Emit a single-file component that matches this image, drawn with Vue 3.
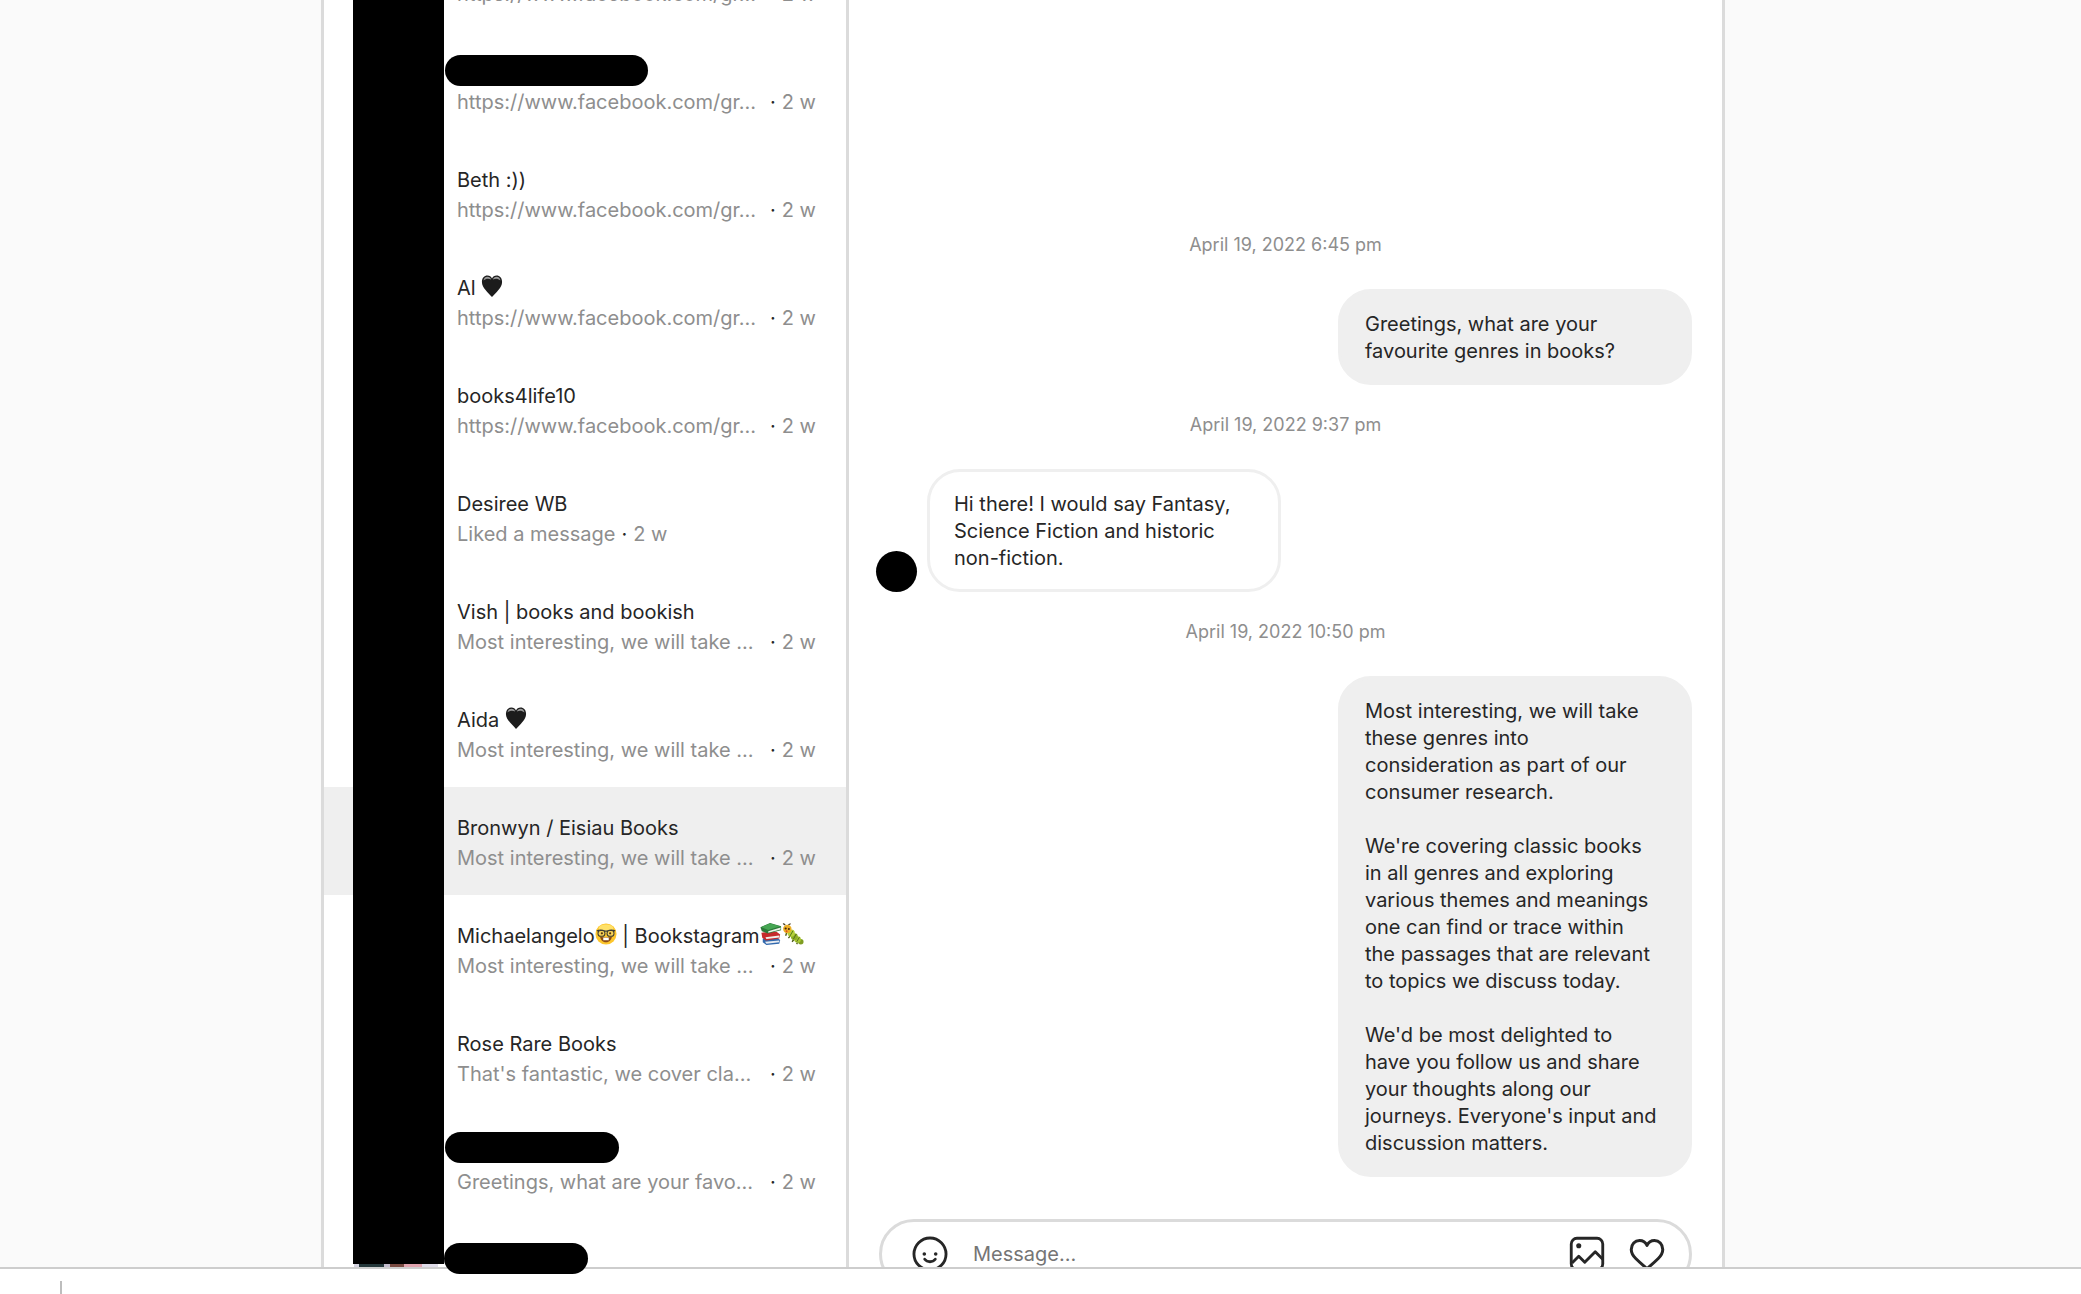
<!--
  Direct messages inbox
  Conversation list on the left, open thread on the right
-->
<template>
  <div class="page">
    <div class="viewport">
      <main class="inbox">
        <nav class="sidebar" aria-label="Conversations">
          <ul class="conversation-list">
            <li v-for="item in conversations" :key="item.id">
              <a href="#" class="conversation" :class="{ selected: item.selected }">
                <span class="avatar" :class="{ photo: item.photo }"></span>
                <span class="conversation-text">
                  <span class="conversation-name">
                    <template v-for="(part, i) in item.name" :key="i">
                      <span v-if="part.text" class="name-text">{{ part.text }}</span>
                      <svg v-else class="emoji" viewBox="0 0 24 24" aria-hidden="true">
                        <template v-if="part.emoji === 'heart'">
                          <path d="M12 24C8 19 1 14 1 7.500 1 3 3.700.5 7 .5c2.300 0 4.200 1.300 5 3.200C12.800 1.800 14.700.5 17 .5c3.300 0 6 2.500 6 7C23 14 16 19 12 24z" fill="#1c1c1c" />
                          <path d="M2.800 6C3 3.500 4.700 2 7 2c2 0 3.500 1.200 4 2.800C8 3.600 5.300 3.800 2.800 6z" fill="#9a9a9a" />
                          <path d="M13 4.800C13.700 3.200 15 2 17 2c2.300 0 4 1.500 4.200 4C18.700 3.800 16 3.600 13 4.800z" fill="#9a9a9a" />
                        </template>
                        <template v-else-if="part.emoji === 'nerd'">
                          <circle cx="12" cy="12" r="11.500" fill="#fdc62d" />
                          <ellipse cx="12" cy="6" rx="8" ry="4.500" fill="#ffe169" />
                          <path d="M5.500 15c1 4.500 3.500 6 6.500 6s5.500-1.500 6.500-6c-4 1.200-9 1.200-13 0z" fill="#8a4b14" />
                          <path d="M9 16h6v2.800H9z" fill="#fff" />
                          <path d="M2 8.500c3-1 6-1 8.500.3h3c2.500-1.300 5.500-1.300 8.500-.3" fill="none" stroke="#3b3b34" stroke-width="1.400" />
                          <rect x="3.300" y="8.300" width="7.500" height="6.200" rx="2.800" fill="#f6d257" stroke="#3b3b34" stroke-width="1.100" />
                          <rect x="13.200" y="8.300" width="7.500" height="6.200" rx="2.800" fill="#f6d257" stroke="#3b3b34" stroke-width="1.100" />
                          <circle cx="7.500" cy="11.300" r="1.200" fill="#553410" />
                          <circle cx="16.500" cy="11.300" r="1.200" fill="#553410" />
                        </template>
                        <template v-else-if="part.emoji === 'books'">
                          <path d="M3 17l15-1.500 4 3-1 4L7 24l-4-3z" fill="#3269ae" />
                          <path d="M5.500 20.500L21 19v2L7 22.500z" fill="#e9edf2" />
                          <path d="M1.500 10.500L18 9.500l4 3-1 4.500-14.500 2-4-3z" fill="#c52a2a" />
                          <path d="M6 15.500L21 13.500v2.300L7 17.500z" fill="#f2eee9" />
                          <path d="M.5 4.500L11 0l12 3.500v4.500L8.500 11.500 2 9z" fill="#2c7a39" />
                          <path d="M1.500 4.500L11 .5l11 3L9 7.500z" fill="#46a653" />
                          <path d="M9 9l13.500-4v2L9 10.500z" fill="#eef2e8" />
                        </template>
                        <template v-else>
                          <path d="M3.500 2.500C3 1.200 2 .8 1 1M7 3c.3-1.500 1.500-2.200 2.500-1.800" fill="none" stroke="#3c3316" stroke-width="1.200" />
                          <path d="M5 11l-1 3M9 14l-2 2.500M13 18l-2 2.500M17 21l-1 2" stroke="#4b5a14" stroke-width="1.500" />
                          <circle cx="20.500" cy="20.500" r="3" fill="#7f9d22" />
                          <circle cx="17" cy="18" r="3.600" fill="#a8c832" />
                          <circle cx="13.500" cy="15" r="3.800" fill="#8dae27" />
                          <circle cx="10" cy="11" r="4" fill="#b3d13a" />
                          <path d="M12 8.500l-3.500 6M15.500 12l-3 5.500M19 15.500l-3 5" stroke="#52691a" stroke-width="1" />
                          <circle cx="5.800" cy="6.500" r="4.600" fill="#ecae25" />
                          <circle cx="4" cy="6" r="1.200" fill="#44240c" />
                          <circle cx="7.500" cy="6.500" r="1.100" fill="#44240c" />
                          <circle cx="5" cy="9" r="1" fill="#dd4b22" />
                        </template>
                      </svg>
                    </template>
                  </span>
                  <span v-if="item.preview" class="conversation-preview">
                    <span class="preview-text" :class="{ fill: item.preview.endsWith('…') }">{{ item.preview }}</span>
                    <span class="dot">·</span>
                    <span class="age">2 w</span>
                  </span>
                </span>
                <span
                  v-if="item.cover"
                  class="name-cover"
                  :style="{ left: item.cover.left + 'px', top: item.cover.top + 'px', width: item.cover.width + 'px' }"
                ></span>
              </a>
            </li>
          </ul>
          <div class="avatar-cover"></div>
        </nav>

        <section class="thread" aria-label="Messages">
          <template v-for="message in messages" :key="message.time">
            <time class="message-time">{{ message.time }}</time>
            <div class="message" :class="{ own: message.own }">
              <span v-if="!message.own" class="sender"></span>
              <p class="bubble">{{ message.text }}</p>
            </div>
          </template>

          <form class="composer" @submit.prevent>
            <button type="button" class="icon-button" aria-label="Emoji">
              <svg viewBox="0 0 24 24" fill="#262626" aria-hidden="true">
                <circle cx="12" cy="12" r="10.700" fill="none" stroke="#262626" stroke-width="1.900" />
                <circle cx="8.200" cy="12" r="1.200" />
                <circle cx="15.800" cy="12" r="1.200" />
                <path d="M8.500 15.500c1.700 2.200 5.300 2.200 7 0" fill="none" stroke="#262626" stroke-width="1.900" stroke-linecap="round" />
              </svg>
            </button>
            <input v-model="draft" class="composer-input" type="text" placeholder="Message..." aria-label="Message" />
            <button type="button" class="icon-button" aria-label="Add photo">
              <svg viewBox="0 0 24 24" fill="none" stroke="#262626" stroke-width="1.900" stroke-linejoin="round" aria-hidden="true">
                <rect x="1.500" y="1.500" width="21" height="21" rx="3.800" />
                <circle cx="6.500" cy="6.500" r="1.700" fill="#262626" stroke="none" />
                <path d="M2 18l4.500-4.500 4 4 7-7 5 5" />
              </svg>
            </button>
            <button type="button" class="icon-button" aria-label="Send a like">
              <svg viewBox="0 0 24 24" fill="none" stroke="#262626" stroke-width="2" stroke-linejoin="round" aria-hidden="true">
                <path d="M12 21.800C11 20.800 7.500 18 4.500 15 2.300 12.800 1.500 11.300 1.500 9 1.500 5.600 4 3 7 3c2.300 0 4 1.100 5 3.300C13 4.100 14.700 3 17 3c3 0 5.500 2.600 5.500 6 0 2.300-.8 3.800-3 6-3 3-6.500 5.800-7.500 6.800z" />
              </svg>
            </button>
          </form>
        </section>
      </main>
    </div>

    <footer class="bottom-bar">
      <span class="divider"></span>
    </footer>
  </div>
</template>

<script setup>
import { ref } from 'vue';

const draft = ref('');

const LINK = 'https://www.facebook.com/gr…';
const INTERESTING = 'Most interesting, we will take …';

const conversations = [
  { id: 1, name: [], preview: LINK },
  { id: 2, name: [], preview: LINK, cover: { left: 121, top: 24, width: 203 } },
  { id: 3, name: [{ text: 'Beth :))' }], preview: LINK },
  { id: 4, name: [{ text: 'Al ' }, { emoji: 'heart' }], preview: LINK },
  { id: 5, name: [{ text: 'books4life10' }], preview: LINK },
  { id: 6, name: [{ text: 'Desiree WB' }], preview: 'Liked a message' },
  { id: 7, name: [{ text: 'Vish | books and bookish' }], preview: INTERESTING },
  { id: 8, name: [{ text: 'Aida ' }, { emoji: 'heart' }], preview: INTERESTING },
  { id: 9, name: [{ text: 'Bronwyn / Eisiau Books' }], preview: INTERESTING, selected: true },
  {
    id: 10,
    name: [
      { text: 'Michaelangelo' },
      { emoji: 'nerd' },
      { text: ' | Bookstagram' },
      { emoji: 'books' },
      { emoji: 'caterpillar' }
    ],
    preview: INTERESTING
  },
  { id: 11, name: [{ text: 'Rose Rare Books' }], preview: "That's fantastic, we cover cla…" },
  { id: 12, name: [], preview: 'Greetings, what are your favo…', cover: { left: 121, top: 21, width: 174 } },
  { id: 13, name: [], photo: true, cover: { left: 120, top: 24, width: 144 } }
];

const messages = [
  {
    time: 'April 19, 2022 6:45 pm',
    own: true,
    text: 'Greetings, what are your\nfavourite genres in books?'
  },
  {
    time: 'April 19, 2022 9:37 pm',
    own: false,
    text: 'Hi there! I would say Fantasy,\nScience Fiction and historic\nnon-fiction.'
  },
  {
    time: 'April 19, 2022 10:50 pm',
    own: true,
    text: [
      'Most interesting, we will take',
      'these genres into',
      'consideration as part of our',
      'consumer research.',
      '',
      "We're covering classic books",
      'in all genres and exploring',
      'various themes and meanings',
      'one can find or trace within',
      'the passages that are relevant',
      'to topics we discuss today.',
      '',
      "We'd be most delighted to",
      'have you follow us and share',
      'your thoughts along our',
      "journeys. Everyone's input and",
      'discussion matters.'
    ].join('\n')
  }
];
</script>

<style>
body {
  margin: 0;
  background: #fafafa;
}
</style>

<style scoped>
.page {
  display: flex;
  flex-direction: column;
  height: 100vh;
  overflow: hidden;
  background: #fafafa;
  color: #262626;
  font-family: Inter, "Liberation Sans", sans-serif;
  font-size: 20px;
  line-height: 27px;
}
/* right padding is the scrollbar gutter */
.viewport {
  display: flex;
  flex: 1;
  justify-content: center;
  min-height: 0;
  padding-right: 35px;
}
.inbox {
  display: flex;
  flex: 1;
  box-sizing: border-box;
  min-width: 0;
  max-width: 1404px;
  border: solid #dbdbdb;
  border-width: 0 3px;
  background: #fff;
}

/* conversation list */
.sidebar {
  position: relative;
  flex: 0 0 522px;
  border-right: 3px solid #dbdbdb;
}
.conversation-list {
  margin: -77px 0 0;
  padding: 0;
  list-style: none;
}
.conversation {
  position: relative;
  display: flex;
  gap: 19px;
  padding: 12px 30px;
  color: inherit;
  text-decoration: none;
}
.conversation.selected {
  background: #efefef;
}
.avatar {
  flex: none;
  width: 84px;
  height: 84px;
}
.avatar.photo {
  background: linear-gradient(90deg, #d5d3e0 0 5px, #24373a 5px 30px, #c3bccd 30px 36px, #7a4b42 36px 50px, #e0a3ae 50px 68px, #dedbe8 68px);
}
.conversation-text {
  display: flex;
  flex: 1;
  flex-direction: column;
  gap: 3px;
  min-width: 0;
  padding-top: 16px;
}
.conversation-name {
  display: flex;
  align-items: center;
  height: 27px;
  white-space: pre;
}
.emoji {
  flex: none;
  width: 22px;
  height: 22px;
  margin-bottom: 5px;
}
.conversation-preview {
  display: flex;
  gap: 6px;
  color: #8e8e8e;
  white-space: nowrap;
}
.preview-text.fill {
  flex: 1;
}
.dot {
  color: #262626;
}
.avatar-cover {
  position: absolute;
  top: 0;
  bottom: 3px;
  left: 29px;
  width: 91px;
  background: #000;
}
.name-cover {
  position: absolute;
  z-index: 2;
  height: 31px;
  border-radius: 16px;
  background: #000;
}

/* thread */
.thread {
  display: flex;
  flex: 1;
  flex-direction: column;
  min-width: 0;
  padding: 205px 30px 0;
}
.message-time {
  padding: 26px 0 31px;
  color: #8e8e8e;
  font-size: 18px;
  text-align: center;
}
.message {
  display: flex;
  align-items: flex-end;
  gap: 10px;
  margin-left: -3px;
}
.message.own {
  justify-content: flex-end;
}
.sender {
  width: 41px;
  height: 41px;
  border-radius: 50%;
  background: #000;
}
.bubble {
  box-sizing: border-box;
  width: 354px;
  margin: 0;
  padding: 19px 24px 17px;
  border: 3px solid #efefef;
  border-radius: 33px;
  white-space: pre;
}
.own .bubble {
  background: #efefef;
}
.composer {
  display: flex;
  flex: none;
  align-items: center;
  box-sizing: border-box;
  height: 70px;
  margin-top: 42px;
  padding: 0 24px 0 30px;
  border: 3px solid #dbdbdb;
  border-radius: 35px;
}
.icon-button {
  display: flex;
  padding: 0;
  border: 0;
  background: none;
}
.icon-button + .icon-button {
  margin-left: 24px;
}
.icon-button svg {
  width: 36px;
  height: 36px;
}
.composer-input {
  flex: 1;
  min-width: 0;
  padding: 0 25px;
  border: 0;
  outline: 0;
  background: none;
  color: inherit;
  font: inherit;
}
.composer-input::placeholder {
  color: #757575;
  opacity: 1;
}

/* strip below the page */
.bottom-bar {
  position: relative;
  z-index: 1;
  flex: none;
  height: 25px;
  border-top: 2px solid #cdcdcd;
  background: #fff;
}
.divider {
  display: block;
  width: 2px;
  height: 13px;
  margin: 12px 0 0 60px;
  background: #bdbdbd;
}
</style>
